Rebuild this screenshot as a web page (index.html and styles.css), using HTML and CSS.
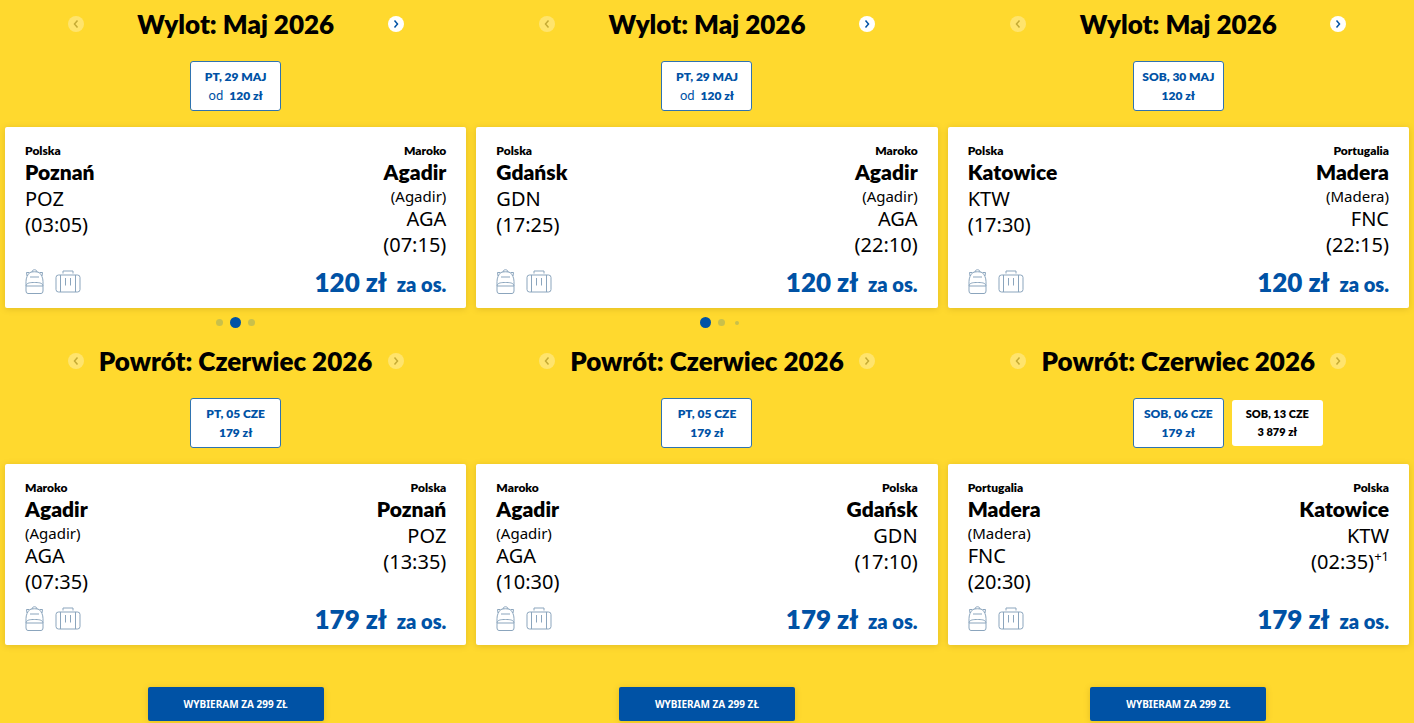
FILE: index.html
```
<!DOCTYPE html>
<html lang="pl">
<head>
  <meta charset="UTF-8" />
  <meta name="viewport" content="width=device-width, initial-scale=1" />
  <title>Wybór lotów</title>
  <link rel="stylesheet" href="styles.css">
</head>
<body>
  <svg class="sprite" aria-hidden="true">
    <symbol id="prev" viewBox="0 0 16 16"><path d="M9.500 4.500 6.500 8l3 3.500" /></symbol>
    <symbol id="next" viewBox="0 0 16 16"><path d="M6.500 4.500l3 3.500-3 3.500" /></symbol>
    <symbol id="backpack" viewBox="0 0 20 26">
      <path d="M5 3.500C2.500 5.500 1 9 1 12.500V22q0 2.500 2 2.500h13q2 0 2-2.500v-9.500C18 9 16.500 5.500 14 3.500 12 2.500 7 2.500 5 3.500z" />
      <path d="M7 3c0-3 5-3 5 0M2 7 1.500 3.500h3M17 7l.5-3.500h-3M5 8h9" />
      <path d="M1 16.500c1-3 5-3 8.500-3s7.500 0 8.500 3M1 17h3M15 17h3M4 17h11" />
    </symbol>
    <symbol id="suitcase" viewBox="0 0 26 24">
      <rect x="1" y="5" width="24" height="17" rx="2.500" />
      <path d="M5.500 5v17M20.500 5v17M8 3.500V1h10v2.500M10.500 8v7.500M15.500 8v7.500" />
    </symbol>
  </svg>
  <main class="offers">
    <article class="offer">
      <section class="flight">
        <header class="month">
          <button class="arrow" aria-label="Poprzedni miesiąc" disabled><svg><use href="#prev" /></svg></button>
          <h2>Wylot: Maj 2026</h2>
          <button class="arrow" aria-label="Następny miesiąc"><svg><use href="#next" /></svg></button>
        </header>
        <div class="dates">
          <button class="date selected"><span>PT, 29 MAJ</span><span><small>od</small>120 zł</span></button>
        </div>
        <div class="card">
          <div class="route">
            <div class="airport">
              <div class="country">Polska</div>
              <h3>Poznań</h3>
              <div class="code">POZ</div>
              <div class="code">(03:05)</div>
            </div>
            <div class="airport arrival">
              <div class="country">Maroko</div>
              <h3>Agadir</h3>
              <div class="port">(Agadir)</div>
              <div class="code">AGA</div>
              <div class="code">(07:15)</div>
            </div>
          </div>
          <div class="summary">
            <svg class="backpack"><use href="#backpack" /></svg>
            <svg class="suitcase"><use href="#suitcase" /></svg>
            <p class="price">120 zł <span>za os.</span></p>
          </div>
        </div>
        <div class="dots"><i></i><i class="active"></i><i></i></div>
      </section>
      <section class="flight">
        <header class="month">
          <button class="arrow" aria-label="Poprzedni miesiąc" disabled><svg><use href="#prev" /></svg></button>
          <h2>Powrót: Czerwiec 2026</h2>
          <button class="arrow" aria-label="Następny miesiąc" disabled><svg><use href="#next" /></svg></button>
        </header>
        <div class="dates">
          <button class="date selected"><span>PT, 05 CZE</span><span>179 zł</span></button>
        </div>
        <div class="card">
          <div class="route">
            <div class="airport">
              <div class="country">Maroko</div>
              <h3>Agadir</h3>
              <div class="port">(Agadir)</div>
              <div class="code">AGA</div>
              <div class="code">(07:35)</div>
            </div>
            <div class="airport arrival">
              <div class="country">Polska</div>
              <h3>Poznań</h3>
              <div class="code">POZ</div>
              <div class="code">(13:35)</div>
            </div>
          </div>
          <div class="summary">
            <svg class="backpack"><use href="#backpack" /></svg>
            <svg class="suitcase"><use href="#suitcase" /></svg>
            <p class="price">179 zł <span>za os.</span></p>
          </div>
        </div>
      </section>
      <button class="choose">WYBIERAM ZA 299 ZŁ</button>
    </article>

    <article class="offer">
      <section class="flight">
        <header class="month">
          <button class="arrow" aria-label="Poprzedni miesiąc" disabled><svg><use href="#prev" /></svg></button>
          <h2>Wylot: Maj 2026</h2>
          <button class="arrow" aria-label="Następny miesiąc"><svg><use href="#next" /></svg></button>
        </header>
        <div class="dates">
          <button class="date selected"><span>PT, 29 MAJ</span><span><small>od</small>120 zł</span></button>
        </div>
        <div class="card">
          <div class="route">
            <div class="airport">
              <div class="country">Polska</div>
              <h3>Gdańsk</h3>
              <div class="code">GDN</div>
              <div class="code">(17:25)</div>
            </div>
            <div class="airport arrival">
              <div class="country">Maroko</div>
              <h3>Agadir</h3>
              <div class="port">(Agadir)</div>
              <div class="code">AGA</div>
              <div class="code">(22:10)</div>
            </div>
          </div>
          <div class="summary">
            <svg class="backpack"><use href="#backpack" /></svg>
            <svg class="suitcase"><use href="#suitcase" /></svg>
            <p class="price">120 zł <span>za os.</span></p>
          </div>
        </div>
        <div class="dots from-start"><i class="active"></i><i></i><i class="far"></i></div>
      </section>
      <section class="flight">
        <header class="month">
          <button class="arrow" aria-label="Poprzedni miesiąc" disabled><svg><use href="#prev" /></svg></button>
          <h2>Powrót: Czerwiec 2026</h2>
          <button class="arrow" aria-label="Następny miesiąc" disabled><svg><use href="#next" /></svg></button>
        </header>
        <div class="dates">
          <button class="date selected"><span>PT, 05 CZE</span><span>179 zł</span></button>
        </div>
        <div class="card">
          <div class="route">
            <div class="airport">
              <div class="country">Maroko</div>
              <h3>Agadir</h3>
              <div class="port">(Agadir)</div>
              <div class="code">AGA</div>
              <div class="code">(10:30)</div>
            </div>
            <div class="airport arrival">
              <div class="country">Polska</div>
              <h3>Gdańsk</h3>
              <div class="code">GDN</div>
              <div class="code">(17:10)</div>
            </div>
          </div>
          <div class="summary">
            <svg class="backpack"><use href="#backpack" /></svg>
            <svg class="suitcase"><use href="#suitcase" /></svg>
            <p class="price">179 zł <span>za os.</span></p>
          </div>
        </div>
      </section>
      <button class="choose">WYBIERAM ZA 299 ZŁ</button>
    </article>

    <article class="offer">
      <section class="flight">
        <header class="month">
          <button class="arrow" aria-label="Poprzedni miesiąc" disabled><svg><use href="#prev" /></svg></button>
          <h2>Wylot: Maj 2026</h2>
          <button class="arrow" aria-label="Następny miesiąc"><svg><use href="#next" /></svg></button>
        </header>
        <div class="dates">
          <button class="date selected"><span>SOB, 30 MAJ</span><span>120 zł</span></button>
        </div>
        <div class="card">
          <div class="route">
            <div class="airport">
              <div class="country">Polska</div>
              <h3>Katowice</h3>
              <div class="code">KTW</div>
              <div class="code">(17:30)</div>
            </div>
            <div class="airport arrival">
              <div class="country">Portugalia</div>
              <h3>Madera</h3>
              <div class="port">(Madera)</div>
              <div class="code">FNC</div>
              <div class="code">(22:15)</div>
            </div>
          </div>
          <div class="summary">
            <svg class="backpack"><use href="#backpack" /></svg>
            <svg class="suitcase"><use href="#suitcase" /></svg>
            <p class="price">120 zł <span>za os.</span></p>
          </div>
        </div>
        <div class="dots"></div>
      </section>
      <section class="flight">
        <header class="month">
          <button class="arrow" aria-label="Poprzedni miesiąc" disabled><svg><use href="#prev" /></svg></button>
          <h2>Powrót: Czerwiec 2026</h2>
          <button class="arrow" aria-label="Następny miesiąc" disabled><svg><use href="#next" /></svg></button>
        </header>
        <div class="dates">
          <button class="date selected"><span>SOB, 06 CZE</span><span>179 zł</span></button>
          <button class="date"><span>SOB, 13 CZE</span><span>3 879 zł</span></button>
        </div>
        <div class="card">
          <div class="route">
            <div class="airport">
              <div class="country">Portugalia</div>
              <h3>Madera</h3>
              <div class="port">(Madera)</div>
              <div class="code">FNC</div>
              <div class="code">(20:30)</div>
            </div>
            <div class="airport arrival">
              <div class="country">Polska</div>
              <h3>Katowice</h3>
              <div class="code">KTW</div>
              <div class="code">(02:35)<sup>+1</sup></div>
            </div>
          </div>
          <div class="summary">
            <svg class="backpack"><use href="#backpack" /></svg>
            <svg class="suitcase"><use href="#suitcase" /></svg>
            <p class="price">179 zł <span>za os.</span></p>
          </div>
        </div>
      </section>
      <button class="choose">WYBIERAM ZA 299 ZŁ</button>
    </article>
  </main>
</body>
</html>
```
FILE: styles.css
```
* {
  box-sizing: border-box;
}
body {
  margin: 0;
  background-color: #ffd92e;
  color: #000;
  font-family: 'Noto Sans', sans-serif;
}
h2, h3, p {
  margin: 0;
}
button {
  padding: 0;
  border: 0;
  font-family: inherit;
  cursor: pointer;
}
svg {
  display: block;
  fill: none;
}
.sprite {
  position: absolute;
  width: 0;
  height: 0;
}
.offers {
  display: grid;
  grid-template-columns: repeat(3, 1fr);
  gap: 10px;
  padding: 0 5px;
}
.offer {
  display: flex;
  flex-direction: column;
}
.month {
  display: flex;
  align-items: center;
  justify-content: space-between;
  width: 336px;
  height: 48px;
  margin: 0 auto;
}
.month h2 {
  font-family: Lato, sans-serif;
  font-size: 26px;
  font-weight: 800;
  line-height: 36px;
}
.arrow {
  width: 16px;
  height: 16px;
  border-radius: 50%;
  background-color: #fff;
}
.arrow svg {
  width: 16px;
  height: 16px;
  stroke: #0052a5;
  stroke-width: 1.5;
}
.arrow:disabled {
  opacity: 0.3;
  cursor: default;
}
.arrow:disabled svg {
  stroke: #444;
}
.dates {
  display: grid;
  grid-template-columns: repeat(3, 91px);
  gap: 8px;
  align-items: center;
  justify-content: center;
  height: 50px;
  margin: 13px 0 16px;
}
.date {
  display: flex;
  flex-direction: column;
  align-items: center;
  justify-content: center;
  height: 46px;
  border-radius: 3px;
  background-color: #fff;
  color: #000;
  font-family: Lato, sans-serif;
  font-size: 11px;
  font-weight: 800;
  line-height: 18px;
}
.date.selected {
  grid-column: 2;
  height: 50px;
  border: 1px solid #2f73b0;
  color: #0052a5;
  font-size: 12px;
  line-height: 19px;
}
.date small {
  margin-right: 6px;
  font-size: 13px;
  font-weight: 400;
}
.card {
  padding: 16px 20px 5px;
  border-radius: 2px;
  background-color: #fff;
  box-shadow: 0 1px 6px rgba(120, 90, 0, 0.22);
}
.route {
  display: flex;
  justify-content: space-between;
  min-height: 118px;
}
.arrival {
  text-align: right;
}
.country {
  font-family: Lato, sans-serif;
  font-size: 12px;
  font-weight: 800;
  line-height: 16px;
}
.airport h3 {
  margin-bottom: 1px;
  font-family: Lato, sans-serif;
  font-size: 21px;
  font-weight: 800;
  line-height: 26px;
}
.port {
  font-size: 15px;
  line-height: 20px;
}
.code {
  font-size: 20px;
  line-height: 26px;
}
.code sup {
  font-size: 13px;
  line-height: 0;
}
.summary {
  display: flex;
  align-items: center;
  height: 42px;
}
.summary svg {
  stroke: #8ba5bd;
  stroke-width: 1;
}
.backpack {
  width: 20px;
  height: 26px;
  margin-right: 10px;
}
.suitcase {
  width: 26px;
  height: 24px;
}
.price {
  margin-left: auto;
  padding-top: 2px;
  color: #0052a5;
  font-family: Lato, sans-serif;
  font-size: 26px;
  font-weight: 800;
  line-height: 40px;
}
.price span {
  margin-left: 5px;
  font-size: 20px;
}
.dots {
  display: flex;
  align-items: center;
  justify-content: center;
  height: 29px;
}
.dots i {
  width: 7px;
  height: 7px;
  margin: 0 4px;
  border-radius: 50%;
  background-color: #c9c04b;
}
.dots .active {
  width: 11px;
  height: 11px;
  margin: 0 3px;
  background-color: #0052a5;
}
.dots.from-start {
  padding-left: 28px;
}
.dots .far {
  width: 4px;
  height: 4px;
  margin: 0 6px;
}
.choose {
  align-self: center;
  width: 176px;
  height: 34px;
  margin: 42px 0 2px;
  border-radius: 2px;
  background-color: #0052a5;
  box-shadow: 0 1px 6px rgba(120, 90, 0, 0.22);
  color: #fff;
  font-size: 10px;
  font-weight: 700;
}
```
